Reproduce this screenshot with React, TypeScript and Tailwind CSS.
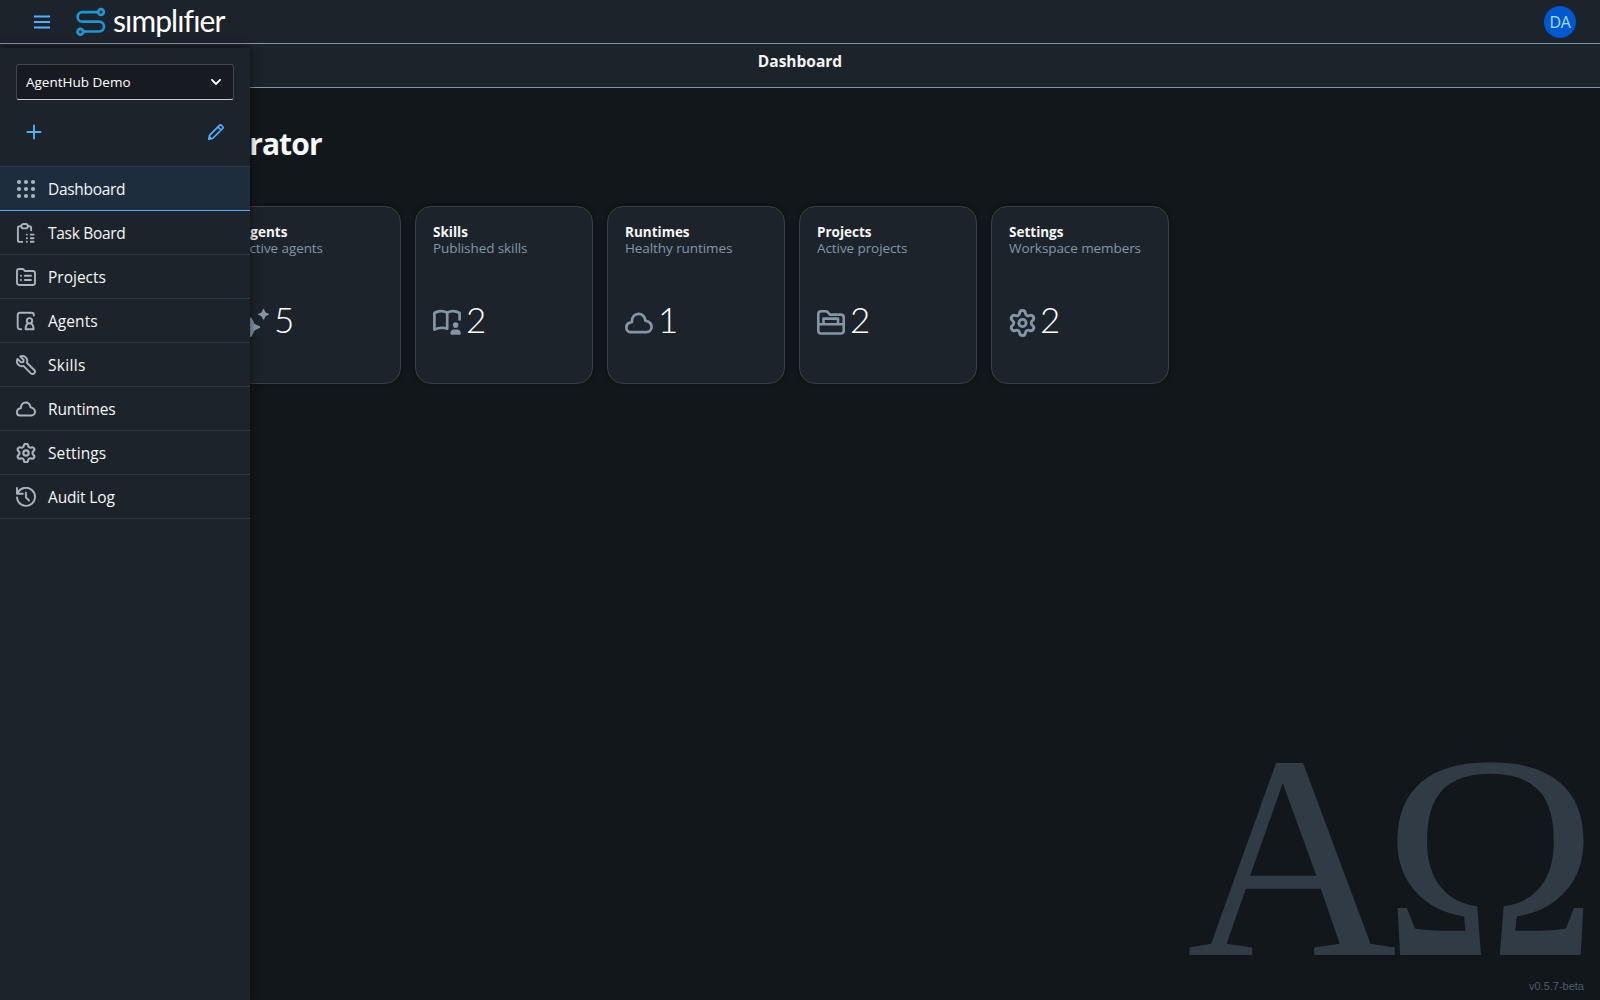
import type { ReactNode } from 'react';

type IconProps = { className?: string };

function GridIcon({ className }: IconProps) {
  return (
    <svg viewBox="0 0 20 20" className={className} fill="currentColor">
      {[3, 10, 17].map((y) => [3, 10, 17].map((x) => <circle key={`${x}-${y}`} cx={x} cy={y} r="2.1" />))}
    </svg>
  );
}

function TaskIcon({ className }: IconProps) {
  return (
    <svg viewBox="0 0 20 20" className={className} fill="none" stroke="currentColor" strokeWidth="1.9" strokeLinecap="round" strokeLinejoin="round">
      <path d="M4.6 3.3H3.6Q1.9 3.3 1.9 5v12.2q0 1.7 1.7 1.7h2.6M12.6 3.3h.8q1.7 0 1.7 1.7v2.2" />
      <rect x="5.3" y="1" width="6.5" height="4.4" rx="2.2" />
      <path d="M10.8 11.6h.1M14.8 11.6h2.8M10.8 15.2h.1M14.8 15.2h2.8M10.8 18.8h.1M14.8 18.8h2.8" />
    </svg>
  );
}

function ProjectIcon({ className }: IconProps) {
  return (
    <svg viewBox="0 0 20 20" className={className} fill="none" stroke="currentColor" strokeWidth="1.9" strokeLinecap="round" strokeLinejoin="round">
      <path d="M1 4.2q0-2.200 2.200-2.200h3.200q.8 0 1.300.6L9 4h7.800q2.200 0 2.200 2.200v9.600q0 2.200-2.200 2.200H3.200q-2.200 0-2.200-2.200z" />
      <path d="M4.900 8.800h.1M8.800 8.800h6.200M4.900 13h.1M8.800 13h6.200" />
    </svg>
  );
}

function AgentIcon({ className }: IconProps) {
  return (
    <svg viewBox="0 0 20 20" className={className} fill="none" stroke="currentColor" strokeWidth="1.9" strokeLinecap="round" strokeLinejoin="round">
      <path d="M5.200 18.200H3.900q-2.200 0-2.200-2.200V4q0-2.200 2.200-2.200h11.700q2.200 0 2.200 2.200v.6" />
      <circle cx="13.500" cy="9.800" r="2.700" />
      <path d="M11.900 12.500Q9.600 14 9.600 18.200h8q0-4.200-2.400-5.700" />
    </svg>
  );
}

function WrenchIcon({ className }: IconProps) {
  return (
    <svg viewBox="0 0 20 20" className={className} fill="none" stroke="currentColor" strokeWidth="1.9" strokeLinecap="round" strokeLinejoin="round">
      <path d="M4.300 1.500L7.700 4.900L7.300 7L5 7.400L1.500 4C.5 6.200 1 8.600 2.700 10C4.100 11.200 5.800 11.500 7.500 10.900L14.800 18.400Q16.300 19.700 17.900 18.500Q19.800 16.800 18.500 15.200L10.900 7.700C11.600 5.800 11.300 4.200 10 2.700C8.500 1 6.300.7 4.300 1.500Z" />
    </svg>
  );
}

function HistoryIcon({ className }: IconProps) {
  return (
    <svg viewBox="0 0 20 20" className={className} fill="none" stroke="currentColor" strokeWidth="1.9" strokeLinecap="round" strokeLinejoin="round">
      <path d="M1 1v5.800h5.800M1.600 6.500A9 9 0 1 1 1 10.400M9.900 5.600v4.700l3.100 3.200" />
    </svg>
  );
}

function CloudIcon({ className }: IconProps) {
  return (
    <svg viewBox="0 -3.500 28 28" className={className} fill="none" stroke="currentColor" strokeWidth="2.800" strokeLinejoin="round">
      <path d="M5.300 19.600H21.500A5.200 5.200 0 0 0 26.600 14.500C26.600 11.500 24.500 9.200 20.500 8.200C19.600 4 17 1.400 13.600 1.400C9.500 1.400 6.800 4.500 6.800 9.600C3.500 10 1.400 12 1.400 15C1.400 17.800 3.200 19.600 5.300 19.600Z" />
    </svg>
  );
}

function GearIcon({ className }: IconProps) {
  return (
    <svg viewBox="1.200 1.200 21.600 21.600" className={className} fill="none" stroke="currentColor" strokeWidth="2.300" strokeLinecap="round" strokeLinejoin="round">
      <path d="M9.671 4.136a2.340 2.340 0 0 1 4.659 0 2.340 2.340 0 0 0 3.319 1.915 2.340 2.340 0 0 1 2.330 4.033 2.340 2.340 0 0 0 0 3.831 2.340 2.340 0 0 1-2.330 4.033 2.340 2.340 0 0 0-3.319 1.915 2.340 2.340 0 0 1-4.659 0 2.340 2.340 0 0 0-3.320-1.915 2.340 2.340 0 0 1-2.330-4.033 2.340 2.340 0 0 0 0-3.831A2.340 2.340 0 0 1 6.350 6.051a2.340 2.340 0 0 0 3.319-1.915" />
      <circle cx="12" cy="12" r="2.900" />
    </svg>
  );
}

function SparkleIcon({ className }: IconProps) {
  return (
    <svg viewBox="0 0 28 28" className={className} fill="currentColor">
      <path d="M9.300 8.400Q10.500 8.400 11.100 9.800L13.100 14.100Q13.500 15 14.400 15.400L18 17.100Q19.300 17.700 19.300 18.200Q19.300 18.700 18 19.300L14.400 21Q13.500 21.400 13.100 22.300L11.100 26.600Q10.500 28 9.300 28Q8.100 28 7.500 26.600L5.500 22.300Q5.100 21.400 4.200 21L.6 19.300Q-.7 18.200.6 17.100L4.200 15.400Q5.100 15 5.500 14.100L7.500 9.800Q8.100 8.400 9.300 8.400Z" />
      <path d="M22.500 0Q23.100 0 23.400.9L24.200 2.800Q24.400 3.400 25 3.700L27 4.500Q28 4.900 28 5.300Q28 5.700 27 6.100L25 6.900Q24.400 7.200 24.200 7.800L23.400 9.700Q23.100 10.600 22.500 10.600Q21.900 10.600 21.600 9.700L20.800 7.800Q20.600 7.200 20 6.900L18 6.100Q17 5.700 17 5.300Q17 4.900 18 4.500L20 3.700Q20.600 3.400 20.800 2.800L21.600.9Q21.900 0 22.500 0Z" />
    </svg>
  );
}

function BookIcon({ className }: IconProps) {
  return (
    <svg viewBox="0 0 28 28" className={className} fill="none" stroke="currentColor" strokeWidth="2.700" strokeLinecap="round" strokeLinejoin="round">
      <path d="M14.200 19.700Q8 17.400 1.400 20.600V4Q7.500.5 14.200 3.600ZM14.200 3.600Q20.500.5 26.600 4V10.400" />
      <circle cx="22.600" cy="16.100" r="2.800" fill="currentColor" stroke="none" />
      <path d="M17.400 24.400q0-3.800 4-3.800h2.400q4 0 4 3.800 0 1.400-1.400 1.400h-7.600q-1.400 0-1.400-1.400z" fill="currentColor" stroke="none" />
    </svg>
  );
}

function FolderIcon({ className }: IconProps) {
  return (
    <svg viewBox="0 0 28 28" className={className} fill="none" stroke="currentColor" strokeWidth="2.600" strokeLinejoin="round">
      <path d="M1.300 5.100q0-2.800 2.800-2.800h4.600q1.200 0 2 .9l2.200 2.400h11q2.800 0 2.800 2.800v13.300q0 2.800-2.800 2.800H4.100q-2.800 0-2.800-2.800z" />
      <path d="M1.300 15.300h25.400M6.500 15.300V9.600h14.500v5.700" />
    </svg>
  );
}

function SimplifierLogo() {
  return (
    <div className="flex items-center">
      <svg viewBox="0 0 30 30" className="h-[30px] w-[30px]" fill="none" stroke="#1b97d5" strokeWidth="2.700">
        <path d="M22 5.100H6.400a4.800 4.800 0 0 0 0 9.600h16.700a4.900 4.900 0 0 1 0 9.800H7.500" />
        <circle cx="25" cy="5" r="2.900" />
        <circle cx="4.400" cy="24.700" r="2.900" />
      </svg>
      <span className="ml-[7px] pb-1 font-['Lato'] text-[30px] leading-[30px] tracking-[-0.900px] text-white">sımplıfıer</span>
    </div>
  );
}

type NavItem = { label: string; icon: ReactNode; tracking: string; active?: boolean };

const navItems: NavItem[] = [
  { label: 'Dashboard', icon: <GridIcon className="size-5" />, tracking: 'tracking-[-0.300px]', active: true },
  { label: 'Task Board', icon: <TaskIcon className="size-5" />, tracking: 'tracking-[-0.300px]' },
  { label: 'Projects', icon: <ProjectIcon className="size-5" />, tracking: 'tracking-normal' },
  { label: 'Agents', icon: <AgentIcon className="size-5" />, tracking: 'tracking-[0.050px]' },
  { label: 'Skills', icon: <WrenchIcon className="size-5" />, tracking: 'tracking-[0.300px]' },
  { label: 'Runtimes', icon: <CloudIcon className="size-5" />, tracking: 'tracking-[-0.100px]' },
  { label: 'Settings', icon: <GearIcon className="size-5" />, tracking: 'tracking-[0.100px]' },
  { label: 'Audit Log', icon: <HistoryIcon className="size-5" />, tracking: 'tracking-[-0.150px]' },
];

const tiles = [
  { title: 'Agents', subtitle: 'Active agents', value: 5, icon: <SparkleIcon className="size-7" /> },
  { title: 'Skills', subtitle: 'Published skills', value: 2, icon: <BookIcon className="size-7" /> },
  { title: 'Runtimes', subtitle: 'Healthy runtimes', value: 1, icon: <CloudIcon className="size-7" /> },
  { title: 'Projects', subtitle: 'Active projects', value: 2, icon: <FolderIcon className="size-7" /> },
  { title: 'Settings', subtitle: 'Workspace members', value: 2, icon: <GearIcon className="-mr-px h-7 w-[27px]" /> },
];

function ShellBar() {
  return (
    <header className="flex h-11 shrink-0 items-center border-b border-[#8396a8] bg-[#1d232a] pr-6 pl-[34px]">
      <button className="mr-[26px] text-[#4db1ff]">
        <svg viewBox="0 0 16 14" className="h-3.5 w-4" stroke="currentColor" strokeWidth="1.800">
          <path d="M0 1.500h16M0 7h16M0 12.500h16" />
        </svg>
      </button>
      <SimplifierLogo />
      <div className="ml-auto flex size-8 items-center justify-center rounded-full bg-[#0057d2] text-base tracking-[-0.400px] text-[#a6e0ff]">
        DA
      </div>
    </header>
  );
}

function SideNav() {
  return (
    <aside className="absolute top-12 bottom-0 left-0 w-[250px] bg-[#1d232a] shadow-[0_0_8px_rgba(0,0,0,0.6)]">
      <div className="flex h-[118px] flex-col px-4 pt-4">
        <button className="flex h-9 items-center justify-between rounded-[3px] border border-[#3f454c] border-b-[#c8c8cf] bg-[#171b21] pr-3 pl-[9px] text-[13.5px] text-white">
          AgentHub Demo
          <svg viewBox="0 0 10 6" className="h-1.5 w-2.5" fill="none" stroke="currentColor" strokeWidth="1.800" strokeLinecap="round" strokeLinejoin="round">
            <path d="M.9.800L5 5L9.100.800" />
          </svg>
        </button>
        <div className="mt-6 flex items-center justify-between px-2.5 text-[#4db1ff]">
          <svg viewBox="0 0 16 16" className="size-4" stroke="currentColor" strokeWidth="1.900" strokeLinecap="round">
            <path d="M8 1.400v13.200M1.400 8h13.200" />
          </svg>
          <svg viewBox="0 0 16 16" className="size-4" fill="none" stroke="currentColor" strokeWidth="1.700" strokeLinejoin="round">
            <path d="M.8 15.200L1.500 11.400L11.500 1.400Q12.500.4 13.500 1.400L14.600 2.500Q15.600 3.500 14.600 4.500L4.600 14.500ZM10 3l3 3M1.200 12.500l2.300 2.300" />
          </svg>
        </div>
      </div>
      <nav className="border-t border-[#36393d]">
        {navItems.map((item) => (
          <a
            key={item.label}
            className={
              item.active
                ? 'flex h-11 items-center gap-3 border-b border-[#4db1ff] bg-[#1d2d3e] px-4 text-[#f5f6f7]'
                : 'flex h-11 items-center gap-3 border-b border-[#2e3742] px-4 text-[#f5f6f7]'
            }
          >
            <span className="text-[#a9b4be]">{item.icon}</span>
            <span className={`pt-px text-[15.5px] leading-6 ${item.tracking}`}>{item.label}</span>
          </a>
        ))}
      </nav>
    </aside>
  );
}

export default function App() {
  return (
    <div className="relative flex h-screen flex-col overflow-hidden bg-[#12171c] font-['Open_Sans','Noto_Sans',sans-serif] text-[#f5f6f7]">
      <ShellBar />
      <div className="flex h-11 shrink-0 justify-center border-b border-[#8396a8] bg-[#1d232a] pt-[5px]">
        <h2 className="text-[15.5px] leading-6 font-bold">Dashboard</h2>
      </div>
      <main className="flex-1 pt-8 pl-[31px]">
        <h1 className="-ml-px text-[30px] leading-[48px] font-bold tracking-[-0.900px]">Demo Administrator</h1>
        <div className="mt-[38px] flex gap-3.5 pl-48">
          {tiles.map((tile) => (
            <div
              key={tile.title}
              className="flex size-[178px] flex-col rounded-2xl border border-[#3b3e42] bg-[#1d232a] px-[17px] pt-4 shadow-[0_0_4px_rgba(0,0,0,0.4)]"
            >
              <div className="text-[13.5px] leading-[18px] font-bold">{tile.title}</div>
              <div className="-mt-px text-[13.5px] leading-4 tracking-[-0.080px] whitespace-nowrap text-[#8396a8]">{tile.subtitle}</div>
              <div className="mt-[43px] flex items-center gap-[5px] text-[#8396a8]">
                {tile.icon}
                <span className="-mt-1 mb-1 font-['Lato'] text-[35px] leading-[48px] font-light text-white">{tile.value}</span>
              </div>
            </div>
          ))}
        </div>
      </main>
      <div className="pointer-events-none absolute right-4 bottom-1.5 flex flex-col items-end">
        <div className="font-['Liberation_Serif',serif] text-[291px] leading-[242px] tracking-[-0.05em] text-[#313b45]">ΑΩ</div>
        <div className="font-['Liberation_Sans',sans-serif] text-[11px] leading-4 text-[#4b5b6d]">v0.5.7-beta</div>
      </div>
      <SideNav />
    </div>
  );
}
